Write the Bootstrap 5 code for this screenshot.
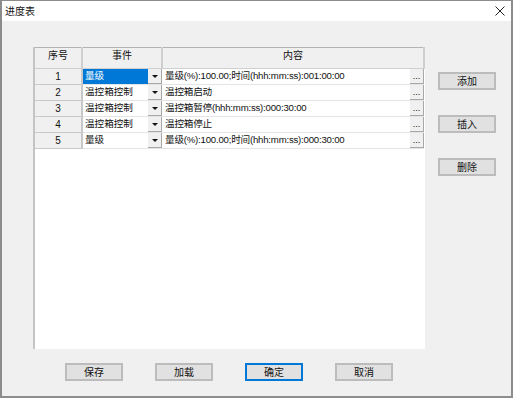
<!DOCTYPE html>
<html lang="zh-CN">
<head>
    <meta charset="UTF-8">
    <meta name="viewport" content="width=device-width, initial-scale=1.0">
    <title>进度表</title>
    <link href="https://cdn.jsdelivr.net/npm/bootstrap@5.3.2/dist/css/bootstrap.min.css" rel="stylesheet">
    <style>
        html, body { width: 514px; height: 400px; overflow: hidden; background: #fff; }
        body { font-family: "Liberation Sans", "Noto Sans CJK SC", sans-serif; font-size: 9.6px; color: #111; }
        .dlg { width: 513px; height: 398px; border: 2px solid #8c8c8c; border-top-width: 1px; background: #f0f0f0; }
        .dlg-title { height: 20px; padding-left: 3px; font-size: 10px; }
        .dlg-close { width: 22px; height: 20px; }
        .dlg-body { padding: 26px 15px 0 31px; gap: 13px; }
        .sheet { width: 392px; height: 302px; background: #fff; border-left: 2px solid #c4c4c4; }
        .sheet table { table-layout: fixed; width: 390px; border-collapse: collapse; }
        .sheet th { height: 21px; padding: 0 0 5px; line-height: 14px; background: #f0f0f0; font-weight: 400; text-align: center; font-size: 10px;
            border-top: 1px solid #b4b4b4; border-right: 2px solid #cfcfcf; border-bottom: 1px solid #cfcfcf; }
        .sheet td { height: 16px; padding: 0 0 0 2px; line-height: 14px; white-space: nowrap; overflow: hidden; border-bottom: 1px solid #e4e4e4; }
        .sheet td.num { padding: 0; text-align: center; font-size: 10px; background: #f0f0f0; border-right: 2px solid #c8c8c8; border-bottom: 1px solid #c8c8c8; }
        .cellbox { height: 15px; }
        .cellbox span { padding-left: 2px; }
        .cell-on { background: #0078d7; color: #fff; width: 65px; }
        .cell-txt { width: 65px; }
        .drop { width: 14px; height: 15px; background: #f0f0f0; border-right: 1px solid #a8a8a8; border-bottom: 1px solid #a8a8a8; }
        .drop i { border-left: 3px solid transparent; border-right: 3px solid transparent; border-top: 3px solid #111; }
        .more { width: 14px; height: 15px; background: #f0f0f0; border-right: 1px solid #a8a8a8; border-bottom: 1px solid #a8a8a8; font-size: 9px; line-height: 15px; text-align: center; }
        .cellbox .cnt { width: 247px; padding-left: 3px; overflow: hidden; letter-spacing: -.2px; }
        .pbtn { width: 58px; height: 18px; padding: 0; background: #e1e1e1; border: 2px solid #bcbcbc; border-radius: 0; font-size: 10px; line-height: 13px; color: #111; }
        .pbtn-def { border-color: #0078d7; }
        .side { margin-top: 25px; gap: 25px; }
        .foot { padding: 14px 0 0 63px; gap: 32px; }
    </style>
</head>
<body>
<div class="dlg d-flex flex-column">
    <div class="dlg-title bg-white d-flex align-items-center justify-content-between">
        <span>进度表</span>
        <div class="dlg-close d-flex align-items-center justify-content-center">
            <svg width="10" height="10" viewBox="0 0 10 10"><path d="M.5.5l9 9M9.5.5l-9 9" stroke="#222" fill="none"/></svg>
        </div>
    </div>
    <div class="dlg-body d-flex">
        <div class="sheet">
            <table>
                <colgroup><col style="width:47px"><col style="width:80px"><col></colgroup>
                <thead><tr><th>序号</th><th>事件</th><th>内容</th></tr></thead>
                <tbody id="rows"></tbody>
            </table>
        </div>
        <div class="side d-flex flex-column">
            <button type="button" class="btn pbtn">添加</button>
            <button type="button" class="btn pbtn">插入</button>
            <button type="button" class="btn pbtn">删除</button>
        </div>
    </div>
    <div class="foot d-flex">
        <button type="button" class="btn pbtn">保存</button>
        <button type="button" class="btn pbtn">加载</button>
        <button type="button" class="btn pbtn pbtn-def">确定</button>
        <button type="button" class="btn pbtn">取消</button>
    </div>
</div>
<script>
var data = [
    ['量级', '量级(%):100.00;时间(hhh:mm:ss):001:00:00'],
    ['温控箱控制', '温控箱启动'],
    ['温控箱控制', '温控箱暂停(hhh:mm:ss):000:30:00'],
    ['温控箱控制', '温控箱停止'],
    ['量级', '量级(%):100.00;时间(hhh:mm:ss):000:30:00']
];
var html = '';
data.forEach(function(r, i) {
    html += '<tr><td class="num">' + (i + 1) + '</td>' +
        '<td class="p-0"><div class="cellbox d-flex justify-content-between"><span class="' + (i == 0 ? 'cell-on' : 'cell-txt') + '">' + r[0] + '</span>' +
        '<div class="drop d-flex align-items-center justify-content-center"><i></i></div></div></td>' +
        '<td class="p-0"><div class="cellbox d-flex justify-content-between"><span class="cnt">' + r[1] + '</span><div class="more">...</div></div></td></tr>';
});
document.getElementById('rows').innerHTML = html;
</script>
</body>
</html>
